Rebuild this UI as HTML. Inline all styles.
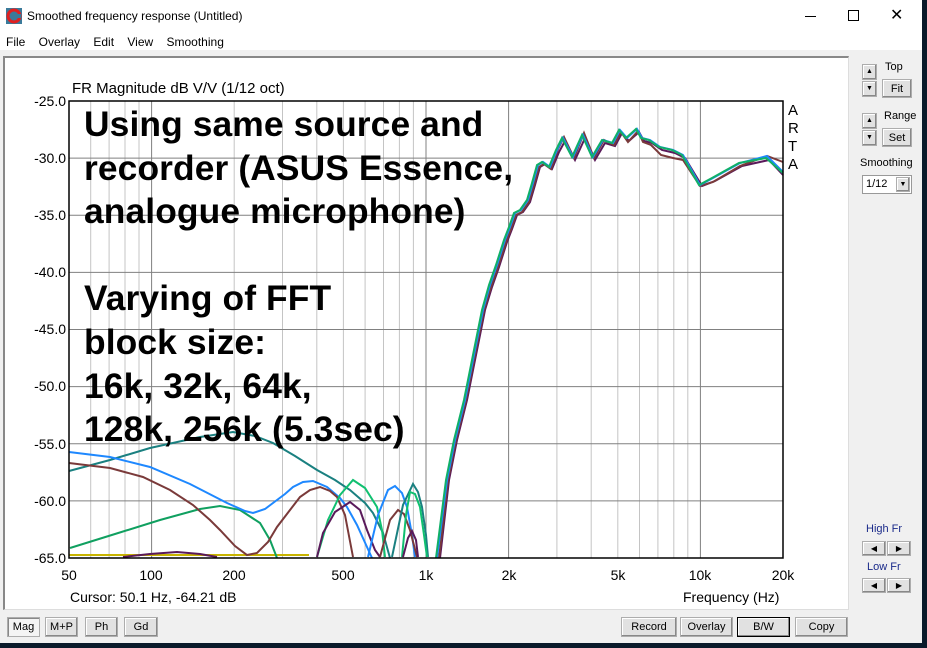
<!DOCTYPE html>
<html><head><meta charset="utf-8"><style>
*{margin:0;padding:0;box-sizing:border-box}
body{width:927px;height:648px;background:#f0f0f0;font-family:"Liberation Sans",sans-serif;position:relative;overflow:hidden}
.abs{position:absolute}
.btn{position:absolute;background:#e1e1e1;border:1px solid #adadad;font-size:11px;text-align:center;line-height:18px;height:20px;color:#000;box-shadow:inset -1px -1px #888,inset 1px 1px #fff}
.sm{font-size:11px;color:#000}
.blue{color:#1a2a8a}
</style></head><body>
<div class="abs" style="left:0;top:0;width:922px;height:50px;background:#fff"></div>
<div class="abs" style="left:922px;top:0;width:5px;height:648px;background:#0a1a2a"></div>
<div class="abs" style="left:0;top:643px;width:927px;height:5px;background:#0a1a2a"></div>
<svg class="abs" style="left:6px;top:8px" width="16" height="16"><rect width="16" height="16" fill="#3a7a9a"/><circle cx="8" cy="8" r="6" fill="none" stroke="#e02020" stroke-width="3"/><rect x="9" y="6" width="6" height="4" fill="#3a7a9a"/></svg>
<div class="abs" style="left:27px;top:9px;font-size:12px">Smoothed frequency response (Untitled)</div>
<div class="abs" style="left:805px;top:16px;width:11px;height:1px;background:#000"></div>
<div class="abs" style="left:848px;top:10px;width:11px;height:11px;border:1px solid #000"></div>
<div class="abs" style="left:890px;top:5px;font-size:16px;font-weight:300">✕</div>
<div class="abs" style="left:6px;top:35px;font-size:12px;word-spacing:0">File&nbsp;&nbsp;&nbsp;&nbsp;Overlay&nbsp;&nbsp;&nbsp;&nbsp;Edit&nbsp;&nbsp;&nbsp;&nbsp;View&nbsp;&nbsp;&nbsp;&nbsp;Smoothing</div>
<div class="abs" style="left:3px;top:56px;width:846px;height:554px;background:#fff;border-left:2px solid #888;border-top:2px solid #888;border-right:1px solid #ddd;border-bottom:1px solid #ddd"></div>
<svg class="abs" style="left:0;top:0" width="927" height="648">
<g stroke="#c4c4c4" stroke-width="1">
<path d="M90.7 101V558M109.1 101V558M125 101V558M139 101V558M234.2 101V558M282.5 101V558M316.8 101V558M343.4 101V558M365.1 101V558M383.5 101V558M399.4 101V558M413.4 101V558M556.9 101V558M591.2 101V558M617.8 101V558M639.5 101V558M657.9 101V558M673.8 101V558M687.8 101V558"/>
</g>
<g stroke="#808080" stroke-width="1">
<path d="M151.6 101V558M426 101V558M508.6 101V558M700.4 101V558M69 158.1H783M69 215.3H783M69 272.4H783M69 329.5H783M69 386.6H783M69 443.8H783M69 500.9H783"/>
</g>
<g fill="none" stroke-width="2">
<polyline stroke="#c8b400" points="69,555 309,555"/>
<polyline stroke="#5a1a5a" points="123,557 150,554 177,552 200,554 217,557"/>
<polyline stroke="#10a060" points="70,548 115,534 160,520 200,509 220,506 240,510 260,523 270,540 277,558"/>
<polyline stroke="#1a8080" points="69,471 110,460 150,448 200,437 233,432 255,436 273,443 295,456 317,470 335,480 350,490 365,503 373,513 383,533 390,558"/>
<polyline stroke="#1e88ff" points="69,452 110,457 150,467 190,484 227,503 245,511 253,513 265,509 273,503 285,494 293,487 303,482 313,481 327,487 340,498 347,507 357,525 367,547 372,558"/>
<polyline stroke="#7a3a3a" points="69,463 110,468 143,477 170,490 193,505 210,520 220,530 235,546 247,555 257,553 268,542 277,527 290,510 300,497 310,490 320,487 330,491 337,497 345,515 353,557"/>
<polyline stroke="#10c070" points="317,557 328,520 340,495 353,480 365,488 377,507 382,530 385,557"/>
<polyline stroke="#5a1a5a" points="317,557 323,533 335,512 350,502 360,510 367,530 375,550 380,557"/>
<polyline stroke="#1e88ff" points="368,557 378,515 388,490 395,486 402,493 407,507 412,535 415,557"/>
<polyline stroke="#7a3a3a" points="380,557 390,520 398,510 404,514 410,530 417,557"/>
<polyline stroke="#1a8080" points="392,557 403,505 413,484 418,492 422,507 426,535 428,557"/>
<polyline stroke="#10c070" points="402,557 406,515 410,492 415,494 420,507 424,535 427,557"/>
<polyline stroke="#5a1a5a" points="403,557 408,538 412,531 416,540 418,557"/>
<polyline stroke="#5a1a5a" points="440,558 449,480 457,440 467,400 477,350 485,310 492,287 499,267 507,242 512,229 517,215 523,212 530,202 535,185 540,167 545,164 552,169 559,152 565,141 575,160 585,138 595,160 605,143 615,146 622,133 629,141 639,132 644,141 652,143 662,150 675,153 685,158 702,186 715,181 742,166 769,160 783,175"/>
<polyline stroke="#7a3a3a" points="439,558 448,480 456,440 466,400 476,350 484,310 491,287 498,267 506,242 511,229 516,215 522,212 529,202 534,185 539,167 544,164 551,169 558,149 564,137 574,158 584,133 594,158 604,140 614,145 621,132 628,142 638,131 643,142 651,145 661,155 673,158 683,160 700,186 713,182 740,166 767,156 783,162"/>
<polyline stroke="#1e88ff" points="437,558 447,480 455,440 465,400 475,350 483,310 490,285 497,265 505,240 510,227 515,213 521,210 528,200 533,183 538,165 543,162 550,167 557,150 563,138 573,157 583,135 593,157 603,140 613,143 620,130 627,138 637,129 642,138 650,140 660,147 673,150 683,155 700,185 713,178 740,163 767,156 783,172"/>
<polyline stroke="#10b068" points="436,558 446,480 454,440 464,400 474,350 482,310 489,285 496,265 504,240 509,227 514,213 520,210 527,200 532,183 537,165 542,162 549,167 556,150 562,138 572,157 582,135 592,157 602,140 612,143 619,130 626,138 636,129 641,138 649,140 659,147 672,150 682,155 699,185 712,178 739,163 766,158 783,173"/>
</g>
<rect x="69" y="101" width="714" height="457" fill="none" stroke="#000" stroke-width="1.5"/>
</svg>
<div class="abs" style="left:72px;top:80px;font-size:15px">FR Magnitude dB V/V (1/12 oct)</div>
<div class="abs" style="left:24px;top:93px;width:42px;text-align:right;font-size:14px;line-height:16px">-25.0</div>
<div class="abs" style="left:24px;top:150px;width:42px;text-align:right;font-size:14px;line-height:16px">-30.0</div>
<div class="abs" style="left:24px;top:207px;width:42px;text-align:right;font-size:14px;line-height:16px">-35.0</div>
<div class="abs" style="left:24px;top:264px;width:42px;text-align:right;font-size:14px;line-height:16px">-40.0</div>
<div class="abs" style="left:24px;top:321px;width:42px;text-align:right;font-size:14px;line-height:16px">-45.0</div>
<div class="abs" style="left:24px;top:378px;width:42px;text-align:right;font-size:14px;line-height:16px">-50.0</div>
<div class="abs" style="left:24px;top:436px;width:42px;text-align:right;font-size:14px;line-height:16px">-55.0</div>
<div class="abs" style="left:24px;top:493px;width:42px;text-align:right;font-size:14px;line-height:16px">-60.0</div>
<div class="abs" style="left:24px;top:550px;width:42px;text-align:right;font-size:14px;line-height:16px">-65.0</div>
<div class="abs" style="left:788px;top:102px;font-size:15px;line-height:18px">A<br>R<br>T<br>A</div>
<div class="abs" style="top:567px;left:0;width:927px;font-size:14px;line-height:16px">
<span class="abs" style="left:49px;width:40px;text-align:center">50</span>
<span class="abs" style="left:131px;width:40px;text-align:center">100</span>
<span class="abs" style="left:214px;width:40px;text-align:center">200</span>
<span class="abs" style="left:323px;width:40px;text-align:center">500</span>
<span class="abs" style="left:406px;width:40px;text-align:center">1k</span>
<span class="abs" style="left:489px;width:40px;text-align:center">2k</span>
<span class="abs" style="left:598px;width:40px;text-align:center">5k</span>
<span class="abs" style="left:680px;width:40px;text-align:center">10k</span>
<span class="abs" style="left:763px;width:40px;text-align:center">20k</span>
</div>
<div class="abs" style="left:70px;top:589px;font-size:14px">Cursor: 50.1 Hz, -64.21 dB</div>
<div class="abs" style="left:683px;top:589px;font-size:14px">Frequency (Hz)</div>
<div class="abs" style="left:84px;top:103px;font-size:35.4px;font-weight:bold;line-height:43.6px;white-space:nowrap;letter-spacing:0.1px">Using same source and<br>recorder (ASUS Essence,<br>analogue microphone)<br><br>Varying of FFT<br>block size:<br>16k, 32k, 64k,<br>128k, 256k (5.3sec)</div>

<div class="btn" style="left:862px;top:64px;width:15px;height:16px;font-size:7px;line-height:14px">▲</div>
<div class="btn" style="left:862px;top:81px;width:15px;height:16px;font-size:7px;line-height:14px">▼</div>
<div class="abs sm" style="left:885px;top:61px">Top</div>
<div class="btn" style="left:882px;top:79px;width:30px;height:19px">Fit</div>
<div class="btn" style="left:862px;top:113px;width:15px;height:16px;font-size:7px;line-height:14px">▲</div>
<div class="btn" style="left:862px;top:130px;width:15px;height:16px;font-size:7px;line-height:14px">▼</div>
<div class="abs sm" style="left:884px;top:110px">Range</div>
<div class="btn" style="left:882px;top:128px;width:30px;height:19px">Set</div>
<div class="abs sm" style="left:860px;top:157px">Smoothing</div>
<div class="abs" style="left:862px;top:175px;width:50px;height:19px;background:#fff;border:1px solid #999;font-size:11px;padding:2px 0 0 3px">1/12</div>
<div class="btn" style="left:896px;top:177px;width:14px;height:15px;font-size:7px;line-height:13px">▼</div>
<div class="abs sm blue" style="left:866px;top:523px">High Fr</div>
<div class="btn" style="left:862px;top:541px;width:24px;height:15px;font-size:8px;line-height:13px">◀</div>
<div class="btn" style="left:887px;top:541px;width:24px;height:15px;font-size:8px;line-height:13px">▶</div>
<div class="abs sm blue" style="left:867px;top:561px">Low Fr</div>
<div class="btn" style="left:862px;top:578px;width:24px;height:15px;font-size:8px;line-height:13px">◀</div>
<div class="btn" style="left:887px;top:578px;width:24px;height:15px;font-size:8px;line-height:13px">▶</div>

<div class="btn" style="left:7px;top:617px;width:33px;background:#f4f4f4;box-shadow:inset 1px 1px #888">Mag</div>
<div class="btn" style="left:45px;top:617px;width:33px">M+P</div>
<div class="btn" style="left:85px;top:617px;width:33px">Ph</div>
<div class="btn" style="left:124px;top:617px;width:34px">Gd</div>
<div class="btn" style="left:621px;top:617px;width:56px">Record</div>
<div class="btn" style="left:680px;top:617px;width:53px">Overlay</div>
<div class="btn" style="left:737px;top:617px;width:53px;border:1px solid #000">B/W</div>
<div class="btn" style="left:795px;top:617px;width:53px">Copy</div>
</body></html>
